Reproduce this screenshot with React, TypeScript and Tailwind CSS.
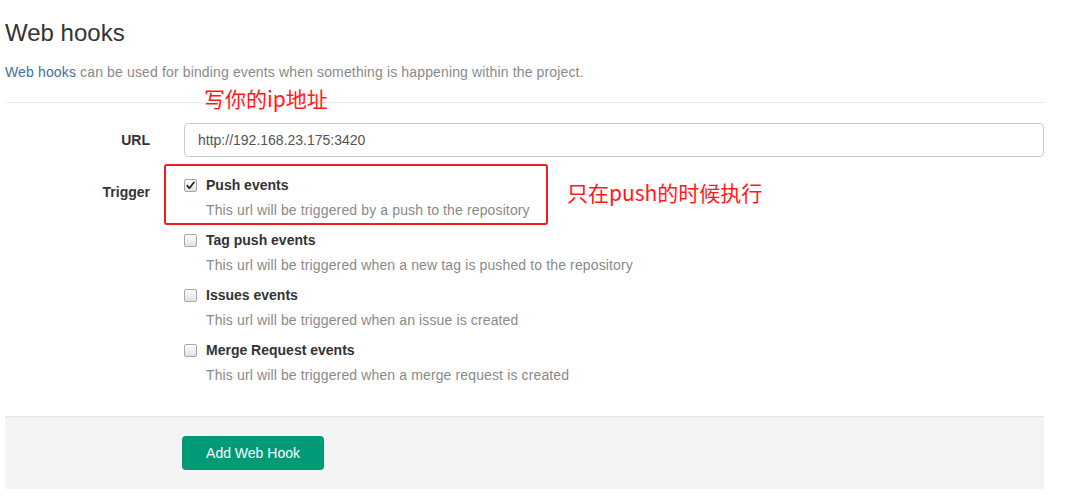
import React from 'react';

const events = [
  { title: 'Push events', hint: 'This url will be triggered by a push to the repository', checked: true },
  { title: 'Tag push events', hint: 'This url will be triggered when a new tag is pushed to the repository', checked: false },
  { title: 'Issues events', hint: 'This url will be triggered when an issue is created', checked: false },
  { title: 'Merge Request events', hint: 'This url will be triggered when a merge request is created', checked: false },
];

const Box: React.FC<{ checked: boolean }> = ({ checked }) => (
  <span className="w-[13px] h-[13px] shrink-0 rounded-[2px] border border-[#a6a6a6] bg-gradient-to-b from-[#fdfdfd] to-[#e2e2e2] flex items-center justify-center">
    {checked && (
      <svg width="9" height="9" viewBox="0 0 9 9">
        <path d="M1.2 4.6 L3.4 7.2 L7.8 1.4" fill="none" stroke="#222" strokeWidth="1.7" strokeLinecap="round" strokeLinejoin="round" />
      </svg>
    )}
  </span>
);

const App: React.FC = () => {
  return (
    <div className="relative w-[1069px] h-[496px] bg-white overflow-hidden font-['Liberation_Sans',Arial,sans-serif] text-[14px] text-[#333]">
      <div className="ml-[5px] w-[1039px]">
        <h3 className="pt-[19px] text-[24px] leading-[28px] font-normal text-[#333]">Web hooks</h3>
        <p className="mt-[16px] leading-[18px] tracking-[0.14px] text-[#8a8a8a]">
          <span className="text-[#3f71a0]">Web hooks</span> can be used for binding events when something is happening within the project.
        </p>
        <div className="mt-[21px] border-t border-[#ececec]" />

        <div className="mt-[20px] flex items-center">
          <label className="w-[145px] text-right font-bold">URL</label>
          <div className="ml-[34px] flex-1 h-[34px] rounded-[4px] border border-[#cccccc] flex items-center px-[13px] text-[#555]">
            http://192.168.23.175:3420
          </div>
        </div>

        <div className="mt-[19px] flex items-start">
          <label className="w-[145px] pt-[7px] leading-[18px] text-right font-bold">Trigger</label>
          <div className="ml-[34px] flex flex-col">
            {events.map(e => (
              <div key={e.title} className="mb-[12px]">
                <div className="flex items-center h-[18px]">
                  <Box checked={e.checked} />
                  <span className="ml-[9px] font-bold leading-[18px]">{e.title}</span>
                </div>
                <p className="mt-[7px] pl-[22px] leading-[18px] tracking-[0.13px] text-[#8a8a8a]">{e.hint}</p>
              </div>
            ))}
          </div>
        </div>

        <div className="mt-[20px] h-[73px] border-t border-[#e5e5e5] bg-[#f4f4f4] pt-[19px] pl-[177px]">
          <button className="w-[142px] h-[34px] rounded-[4px] bg-[#019a77] text-white text-[14px]">Add Web Hook</button>
        </div>
      </div>

      {/* red annotations over the screenshot */}
      <div className="absolute left-[204px] top-[84px] text-[21px] leading-[28px] text-[#ff1a1a] font-['Noto_Sans_CJK_SC',sans-serif]">写你的ip地址</div>
      <div className="absolute left-[164px] top-[164px] w-[384px] h-[61px] border-2 border-[#f01e1e] rounded-[3px]" />
      <div className="absolute left-[567px] top-[178px] text-[21px] leading-[28px] text-[#ff1a1a] font-['Noto_Sans_CJK_SC',sans-serif]">只在push的时候执行</div>
    </div>
  );
};

export default App;
